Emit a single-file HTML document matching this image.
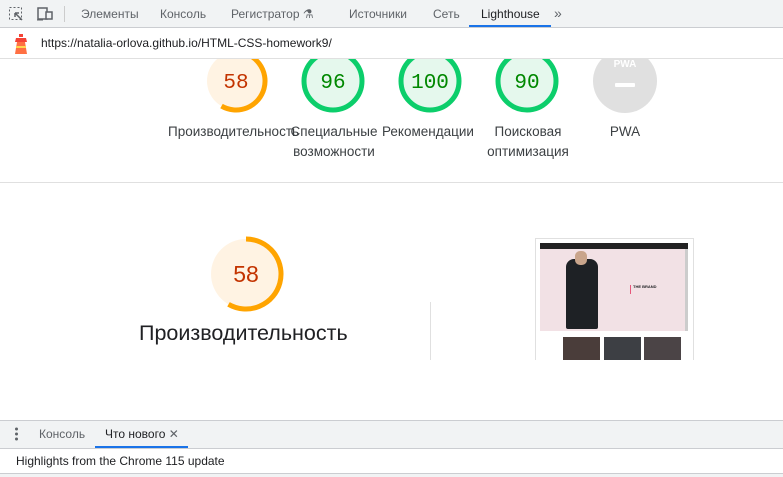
<!DOCTYPE html>
<html><head><meta charset="utf-8"><style>
*{margin:0;padding:0;box-sizing:border-box}
body{width:783px;height:477px;overflow:hidden;background:#fff;font-family:"Segoe UI","Liberation Sans","DejaVu Sans",sans-serif;position:relative;color:#202124}
.a{position:absolute;white-space:nowrap}
.tb{left:0;top:0;width:783px;height:28px;background:#f1f3f4;border-bottom:1px solid #cbcdd1}
.t{font-size:12px;color:#5f6368;top:7px}
.ub{left:0;top:28px;width:783px;height:31px;background:#fff;border-bottom:1px solid #e0e0e0}
.lab{font-size:13.5px;color:#3c4043;text-align:center;line-height:20px}
</style></head><body>

<svg class="a" style="left:0;top:0" width="783" height="200">
 <g stroke-width="5">
  <circle cx="236" cy="81" r="29" fill="#fff3e3" stroke="none"/>
  <path d="M236 52 A29 29 0 1 1 221.5 106.1" fill="none" stroke="#ffa400"/>
  <circle cx="333" cy="81" r="29" fill="#e5f8ed" stroke="#0cce6b"/>
  <circle cx="430" cy="81" r="29" fill="#e5f8ed" stroke="#0cce6b"/>
  <circle cx="527" cy="81" r="29" fill="#e5f8ed" stroke="#0cce6b"/>
  <circle cx="625" cy="81" r="32" fill="#e0e0e0" stroke="none"/>
 </g>
 <rect x="615" y="83" width="20" height="4" rx="1" fill="#fff"/>
 <text x="625" y="67" font-size="10" font-weight="bold" fill="#fff" text-anchor="middle" font-family="Liberation Sans">PWA</text>
 <g font-family="Liberation Mono" font-size="21" text-anchor="middle">
  <text x="236" y="88" fill="#c33300">58</text>
  <text x="333" y="88" fill="#008800">96</text>
  <text x="430" y="88" fill="#008800">100</text>
  <text x="527" y="88" fill="#008800">90</text>
 </g>
 <line x1="0" y1="182.5" x2="783" y2="182.5" stroke="#e0e0e0"/>
</svg>

<div class="a lab" style="left:168px;top:122px">Производительность</div>
<div class="a lab" style="left:288px;top:122px;width:92px">Специальные<br>возможности</div>
<div class="a lab" style="left:382px;top:122px">Рекомендации</div>
<div class="a lab" style="left:483px;top:122px;width:90px">Поисковая<br>оптимизация</div>
<div class="a lab" style="left:605px;top:122px;width:40px">PWA</div>

<svg class="a" style="left:200px;top:228px" width="100" height="100">
 <circle cx="46" cy="46" r="35" fill="#fff3e3"/>
 <path d="M46 11 A35 35 0 1 1 28.5 76.3" fill="none" stroke="#ffa400" stroke-width="5"/>
 <text x="46" y="54" font-family="Liberation Sans" font-size="23" fill="#c33300" text-anchor="middle">58</text>
</svg>
<div class="a" style="left:139px;top:321px;font-size:21.5px;color:#202124">Производительность</div>
<div class="a" style="left:430px;top:302px;width:1px;height:58px;background:#e0e0e0"></div>

<div class="a" style="left:535px;top:238px;width:159px;height:122px;border:1px solid #e0e0e0;border-bottom:none;background:#fff;overflow:hidden">
 <div class="a" style="left:4px;top:4px;width:148px;height:6px;background:#222"></div>
 <div class="a" style="left:4px;top:10px;width:145px;height:82px;background:#f2e1e5"></div>
 <div class="a" style="left:149px;top:10px;width:3px;height:82px;background:#ccc"></div>
 <div class="a" style="left:30px;top:20px;width:32px;height:70px;background:#1e2125;border-radius:8px 8px 2px 2px"></div>
 <div class="a" style="left:39px;top:12px;width:12px;height:14px;background:#c9a58c;border-radius:5px"></div>
 <div class="a" style="left:94px;top:46px;width:36px;height:9px;border-left:1px solid #e6577a;font-size:4px;font-weight:bold;padding-left:2px;line-height:4px">THE BRAND</div>
 <div class="a" style="left:27px;top:98px;width:37px;height:24px;background:#4a3d3a"></div>
 <div class="a" style="left:68px;top:98px;width:37px;height:24px;background:#3d3f44"></div>
 <div class="a" style="left:108px;top:98px;width:37px;height:24px;background:#4b4446"></div>
</div>
<div class="a" style="left:0;top:360px;width:783px;height:60px;background:#fff"></div>

<div class="a tb"></div>
<svg class="a" style="left:8px;top:6px" width="50" height="18">
 <rect x="1.5" y="1.5" width="12" height="12" fill="none" stroke="#5f6368" stroke-dasharray="2 2"/>
 <path d="M7 7 L14 14 M7 7 h4 M7 7 v4" stroke="#5f6368" stroke-width="1.5" fill="none"/>
 <rect x="30" y="2" width="9" height="11" fill="none" stroke="#5f6368" stroke-width="1.5"/>
 <rect x="38" y="6" width="6" height="7" fill="#f1f3f4" stroke="#5f6368" stroke-width="1.5"/>
 <path d="M29 14 h6" stroke="#5f6368"/>
</svg>
<div class="a" style="left:64px;top:6px;width:1px;height:16px;background:#ccc"></div>
<div class="a t" style="left:81px">Элементы</div>
<div class="a t" style="left:160px">Консоль</div>
<div class="a t" style="left:231px">Регистратор ⚗</div>
<div class="a t" style="left:349px">Источники</div>
<div class="a t" style="left:433px">Сеть</div>
<div class="a t" style="left:481px;color:#202124">Lighthouse</div>
<div class="a" style="left:469px;top:25px;width:82px;height:2px;background:#1a73e8"></div>
<div class="a t" style="left:554px;top:5px;font-size:14px">»</div>

<div class="a ub"></div>
<svg class="a" style="left:12px;top:33px" width="18" height="22">
 <path d="M7 1 h4 v3 h-4z" fill="#f44336"/>
 <path d="M4 5 h10 l1 4 h-12z" fill="#f44336"/>
 <path d="M5 9 h8 l2 12 h-12z" fill="#ff7043"/>
 <path d="M4 13 h10 v2 h-10z" fill="#ffd54f"/>
</svg>
<div class="a" style="left:41px;top:36px;font-size:12px;color:#202124;font-family:'Liberation Sans',sans-serif">https://natalia-orlova.github.io/HTML-CSS-homework9/</div>

<div class="a" style="left:0;top:420px;width:783px;height:29px;background:#f1f3f4;border-top:1px solid #cbcdd1;border-bottom:1px solid #cbcdd1"></div>
<svg class="a" style="left:14px;top:427px" width="5" height="14"><circle cx="2.5" cy="2" r="1.5" fill="#5f6368"/><circle cx="2.5" cy="7" r="1.5" fill="#5f6368"/><circle cx="2.5" cy="12" r="1.5" fill="#5f6368"/></svg>
<div class="a t" style="left:39px;top:427px">Консоль</div>
<div class="a t" style="left:105px;top:427px;color:#202124">Что нового <span style="color:#5f6368">✕</span></div>
<div class="a" style="left:95px;top:446px;width:93px;height:2px;background:#1a73e8"></div>
<div class="a" style="left:16px;top:454px;font-size:12px;color:#202124">Highlights from the Chrome 115 update</div>
<div class="a" style="left:0;top:473px;width:783px;height:4px;background:#f1f3f4;border-top:1px solid #cbcdd1"></div>
</body></html>
